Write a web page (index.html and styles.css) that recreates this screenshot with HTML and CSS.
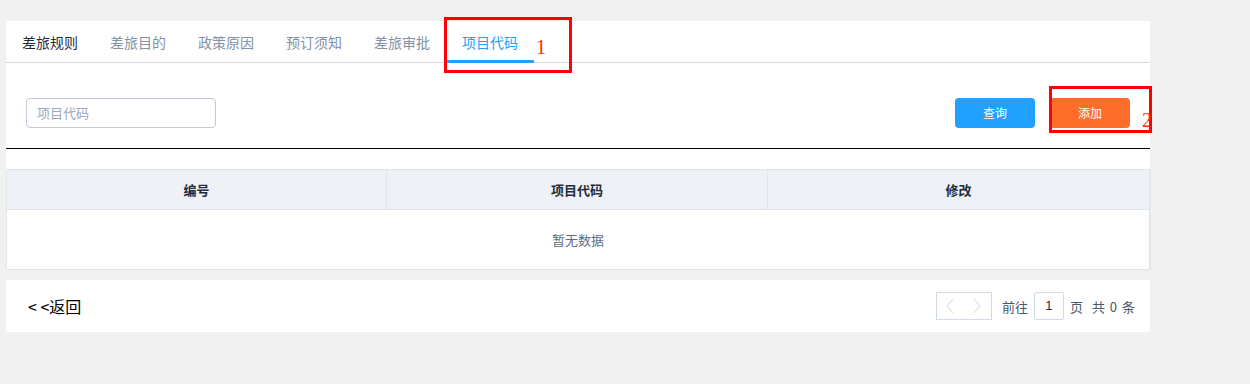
FILE: index.html
```html
<!DOCTYPE html>
<html lang="zh-CN">
<head>
<meta charset="utf-8">
<title>项目代码</title>
<link rel="stylesheet" href="styles.css">
</head>
<body>
<div class="page">
  <div class="panel">
    <div class="tabs">
      <div class="tab tab-first">差旅规则</div>
      <div class="tab">差旅目的</div>
      <div class="tab">政策原因</div>
      <div class="tab">预订须知</div>
      <div class="tab">差旅审批</div>
      <div class="tab tab-active">项目代码</div>
    </div>
    <div class="toolbar">
      <div class="search-input">项目代码</div>
      <div class="actions">
        <button class="btn btn-query">查询</button>
        <button class="btn btn-add">添加</button>
      </div>
    </div>
    <div class="divider"></div>
    <div class="table-wrap">
      <div class="table-head">
        <div class="th">编号</div>
        <div class="th">项目代码</div>
        <div class="th th-last">修改</div>
      </div>
      <div class="table-empty">暂无数据</div>
    </div>
  </div>
  <div class="footer">
    <div class="back">&lt;&nbsp;&lt;返回</div>
    <div class="pager">
      <div class="pager-btns">
        <span class="pager-btn">
          <svg width="10" height="16" viewBox="0 0 10 16"><path d="M8 1 L2 8 L8 15" fill="none" stroke="#e4e8ee" stroke-width="1.4"/></svg>
        </span>
        <span class="pager-btn">
          <svg width="10" height="16" viewBox="0 0 10 16"><path d="M2 1 L8 8 L2 15" fill="none" stroke="#e4e8ee" stroke-width="1.4"/></svg>
        </span>
      </div>
      <span class="pager-text">前往</span>
      <span class="pager-input">1</span>
      <span class="pager-text">页</span>
      <span class="pager-text pager-total">共 0 条</span>
    </div>
  </div>
  <div class="mark mark-1"></div>
  <div class="mark-num mark-num-1">1</div>
  <div class="mark mark-2"></div>
  <div class="mark-num mark-num-2">2</div>
</div>
</body>
</html>
```

FILE: styles.css
```css
html, body {
  margin: 0;
  padding: 0;
  background: #f1f1f1;
}
body {
  font-family: "Microsoft YaHei", "Noto Sans CJK SC", "Liberation Sans", sans-serif;
  color: #1f2d3d;
}
.page {
  position: relative;
  padding: 21px 0 0 6px;
  width: 1144px;
}
.panel {
  background: #fff;
}
.tabs {
  display: flex;
  height: 41px;
  border-bottom: 1px solid #d1dbe5;
}
.tab {
  position: relative;
  padding: 0 16px;
  font-size: 14px;
  line-height: 42px;
  height: 41px;
  color: #8391a5;
}
.tab-first {
  color: #1f2d3d;
}
.tab-active {
  color: #20a0ff;
}
.tab-active::after {
  content: "";
  position: absolute;
  left: 0;
  right: 0;
  bottom: -1px;
  height: 3px;
  background: #20a0ff;
}
.toolbar {
  display: flex;
  align-items: center;
  justify-content: space-between;
  padding: 35px 20px 20px 20px;
}
.search-input {
  box-sizing: border-box;
  width: 190px;
  height: 30px;
  border: 1px solid #bfcbd9;
  border-radius: 4px;
  padding-left: 10px;
  font-size: 13px;
  line-height: 28px;
  color: #97a8be;
}
.actions {
  display: flex;
  gap: 15px;
}
.btn {
  width: 80px;
  height: 30px;
  border: none;
  border-radius: 4px;
  color: #fff;
  font-family: inherit;
  font-size: 12px;
  padding: 0;
  line-height: 30px;
}
.btn-query {
  background: #20a0ff;
}
.btn-add {
  background: #ff6d2b;
}
.divider {
  height: 1px;
  background: #000;
  margin-bottom: 20px;
}
.table-wrap {
  border: 1px solid #dfe6ec;
  border-right-width: 2px;
  margin-right: -1px;
}
.table-head {
  display: grid;
  grid-template-columns: 380px 381px 1fr;
  background: #eef1f6;
  border-bottom: 1px solid #dfe6ec;
}
.th {
  height: 39px;
  line-height: 39px;
  text-align: center;
  font-size: 13px;
  font-weight: bold;
  color: #1f2d3d;
  border-right: 1px solid #dfe6ec;
}
.th-last {
  border-right: none;
}
.table-empty {
  height: 59px;
  line-height: 60px;
  text-align: center;
  font-size: 13px;
  color: #5e6d82;
}
.footer {
  margin-top: 10px;
  height: 52px;
  background: #fff;
  display: flex;
  align-items: center;
  justify-content: space-between;
  padding: 0 14px 0 22px;
}
.back {
  font-size: 16px;
  color: #000;
}
.pager {
  display: flex;
  align-items: center;
  font-size: 13px;
  color: #48576a;
}
.pager-btns {
  display: flex;
  box-sizing: border-box;
  height: 28px;
  border: 1px solid #d1dbe5;
  margin-right: 10px;
}
.pager-btn {
  width: 27px;
  display: flex;
  align-items: center;
  justify-content: center;
}
.pager-input {
  box-sizing: border-box;
  width: 30px;
  height: 28px;
  margin: 0 6px;
  border: 1px solid #d1dbe5;
  border-radius: 2px;
  text-align: center;
  line-height: 26px;
  color: #1f2d3d;
  font-family: "Liberation Sans", sans-serif;
}
.pager-total {
  margin-left: 9px;
  letter-spacing: 1px;
}
.mark {
  position: absolute;
  box-sizing: border-box;
  border: 3px solid #ff0000;
}
.mark-1 {
  left: 444px;
  top: 17px;
  width: 128px;
  height: 56px;
}
.mark-2 {
  left: 1049px;
  top: 86px;
  width: 103px;
  height: 47px;
}
.mark-num {
  position: absolute;
  font-family: "Liberation Serif", serif;
  font-size: 20px;
  line-height: 20px;
  color: #ff2a00;
}
.mark-num-1 {
  left: 536px;
  top: 37px;
}
.mark-num-2 {
  left: 1142px;
  top: 110px;
}
```
